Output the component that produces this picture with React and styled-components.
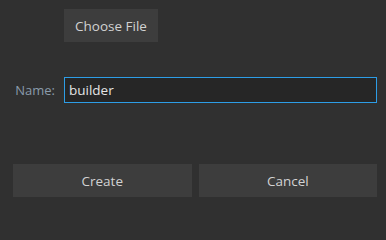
import React from "react";
import styled, { createGlobalStyle } from "styled-components";

const GlobalStyle = createGlobalStyle`
  html, body {
    margin: 0;
    padding: 0;
    background-color: #303030;
  }
`;

const Dialog = styled.div`
  width: 386px;
  height: 208px;
  box-sizing: border-box;
  padding: 9px 9px 0 13px;
  background-color: #303030;
  font-family: "Open Sans", "Noto Sans", sans-serif;
  font-size: 13px;
  display: flex;
  flex-direction: column;
`;

const FieldRow = styled.div`
  display: grid;
  grid-template-columns: 42px 1fr;
  column-gap: 9px;
  align-items: center;
  margin-top: ${(p) => p.$top || 0}px;
`;

const Label = styled.label`
  color: #8a9bab;
  text-align: right;
  font-size: 13px;
`;

const Button = styled.button`
  height: 33px;
  border: none;
  background-color: #3d3d3d;
  color: #d2d2d2;
  font-family: inherit;
  font-size: 13.5px;
  padding: 0;
  cursor: pointer;
`;

const FileButton = styled(Button)`
  grid-column: 2;
  width: 94px;
`;

const NameInput = styled.input`
  height: 26px;
  box-sizing: border-box;
  border: 1px solid #2d9de6;
  background-color: #262626;
  color: #e4e4e4;
  caret-color: #e4e4e4;
  font-family: inherit;
  font-size: 13.5px;
  padding: 0 4px;
  outline: none;
`;

const Actions = styled.div`
  display: grid;
  grid-template-columns: 1fr 1fr;
  column-gap: 7px;
  margin-top: 61px;
`;

export default function App() {
  return (
    <>
      <GlobalStyle />
      <Dialog>
        <FieldRow>
          <FileButton>Choose File</FileButton>
        </FieldRow>
        <FieldRow $top={35}>
          <Label htmlFor="name">Name:</Label>
          <NameInput id="name" defaultValue="builder" autoFocus />
        </FieldRow>
        <Actions>
          <Button>Create</Button>
          <Button>Cancel</Button>
        </Actions>
      </Dialog>
    </>
  );
}
